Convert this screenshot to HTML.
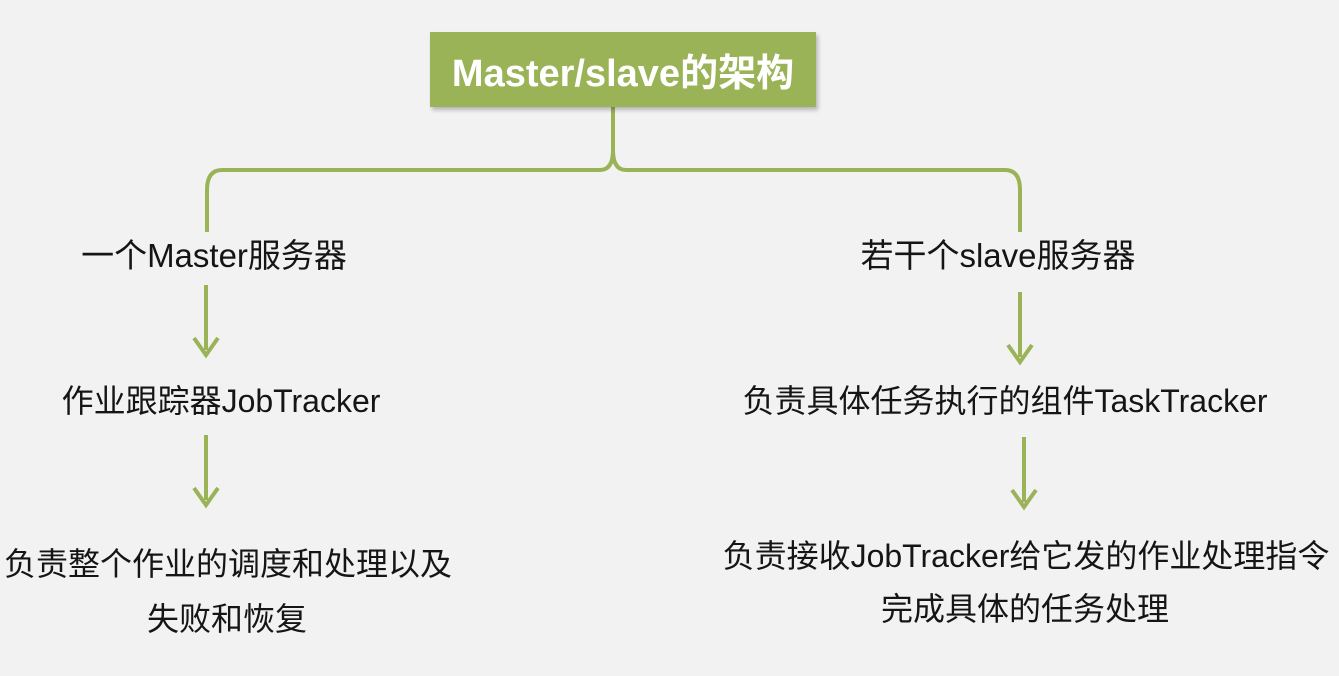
<!DOCTYPE html>
<html><head><meta charset="utf-8"><style>
html,body{margin:0;padding:0;}
body{width:1339px;height:676px;background:#f2f2f2;position:relative;overflow:hidden;font-family:"Liberation Sans","Noto Sans CJK SC",sans-serif;color:#151515;}
.t{position:absolute;white-space:nowrap;transform:translateX(-50%);line-height:1;}
.box{position:absolute;left:430px;top:32px;width:386px;height:75px;background:#9bb357;box-shadow:2px 3px 4px rgba(0,0,0,.25);color:#fff;font-weight:bold;font-size:38px;display:flex;align-items:center;justify-content:center;}
</style></head><body>
<svg width="1339" height="676" style="position:absolute;left:0;top:0">
<g fill="none" stroke="#9bb357" stroke-width="4">
<path d="M613 107 V150 Q613 170 600 170 H222 Q207 170 207 190 V232"/>
<path d="M613 150 Q613 170 626 170 H1005 Q1020 170 1020 190 V232"/>
<path d="M206 285 V350"/><path d="M194 338 L206 355 L218 338"/>
<path d="M206 435 V500"/><path d="M194 488 L206 505 L218 488"/>
<path d="M1020 292 V357"/><path d="M1008 345 L1020 362 L1032 345"/>
<path d="M1024 437 V502"/><path d="M1012 490 L1024 507 L1036 490"/>
</g></svg>
<div class="box">Master/slave的架构</div>
<div class="t" style="left:214px;top:239px;font-size:33px">一个Master服务器</div>
<div class="t" style="left:221px;top:385px;font-size:32px">作业跟踪器JobTracker</div>
<div class="t" style="left:228px;top:548px;font-size:32px">负责整个作业的调度和处理以及</div>
<div class="t" style="left:227px;top:603px;font-size:32px">失败和恢复</div>
<div class="t" style="left:998px;top:239px;font-size:33px">若干个slave服务器</div>
<div class="t" style="left:1005px;top:385px;font-size:32px">负责具体任务执行的组件TaskTracker</div>
<div class="t" style="left:1026px;top:540px;font-size:32px">负责接收JobTracker给它发的作业处理指令</div>
<div class="t" style="left:1025px;top:593px;font-size:32px">完成具体的任务处理</div>
</body></html>
